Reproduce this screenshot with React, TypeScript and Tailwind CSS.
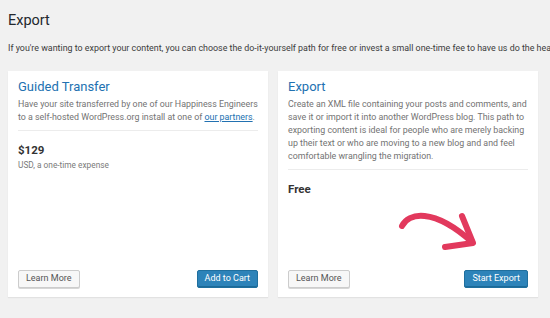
import React from "react";

const font = { fontFamily: 'Roboto, "Liberation Sans", Arial, sans-serif' };

function Button({ primary, children }: { primary?: boolean; children: React.ReactNode }) {
  return primary ? (
    <button className="h-[18px] px-[7px] rounded-[2px] border border-[#1f6f9e] bg-[#2d83b9] text-[9px] text-white shadow-[inset_0_-1px_0_#1b6a98]">
      {children}
    </button>
  ) : (
    <button className="h-[18px] px-[7px] rounded-[2px] border border-[#cccccc] bg-[#f7f7f7] text-[9px] text-[#555555] shadow-[0_1px_0_#d6d6d6]">
      {children}
    </button>
  );
}

function Card({
  title,
  lines,
  price,
  note,
  action,
  overlay,
}: {
  title: string;
  lines: React.ReactNode[];
  price: string;
  note?: string;
  action: string;
  overlay?: React.ReactNode;
}) {
  return (
    <div className="relative flex h-[226px] flex-col bg-white px-[10px] pt-[8px] pb-[9px] shadow-[0_1px_1px_#e2e2e2]">
      <h2 className="text-[13px] leading-[16px] text-[#2271b1]">{title}</h2>
      <div className="mt-[3px] text-[8.85px] leading-[13px] text-[#737373]">
        {lines.map((l, i) => (
          <div key={i} className="whitespace-nowrap">
            {l}
          </div>
        ))}
      </div>
      <div className="mt-[6px] h-px bg-[#ececec]" />
      <div className="mt-[12px] text-[11.5px] font-bold leading-[14px] text-[#333333]">{price}</div>
      {note && <div className="mt-[3px] text-[8.3px] leading-[10px] text-[#7a7a7a]">{note}</div>}
      <div className="mt-auto flex items-center justify-between">
        <Button>Learn More</Button>
        <Button primary>{action}</Button>
      </div>
      {overlay}
    </div>
  );
}

function Arrow() {
  return (
    <svg className="pointer-events-none absolute inset-0" width="260" height="226" viewBox="0 0 260 226">
      <g fill="none" stroke="#e2395d" strokeWidth="6" strokeLinecap="round" strokeLinejoin="round">
        <path d="M124 155 C130 142 155 136 194 171" />
        <path d="M184 145 L195 172 L167 176" />
      </g>
    </svg>
  );
}

export default function App() {
  return (
    <div className="h-[318px] w-[550px] overflow-hidden bg-[#f1f1f1]" style={font}>
      <div className="pl-[8px] pr-[12px] pt-[11px]">
        <h1 className="text-[14.5px] leading-[20px] text-[#23282d]">Export</h1>
        <p className="mt-[11px] whitespace-nowrap text-[8.9px] leading-[12px] text-[#3c3c3c]">
          If you're wanting to export your content, you can choose the do-it-yourself path for free or invest a small one-time fee to have us do the heavy lifting for you.
        </p>
        <div className="mt-[17px] grid grid-cols-2 gap-[10px]">
          <Card
            title="Guided Transfer"
            price="$129"
            note="USD, a one-time expense"
            action="Add to Cart"
            lines={[
              "Have your site transferred by one of our Happiness Engineers",
              <>
                to a self-hosted WordPress.org install at one of{" "}
                <a href="#" className="text-[#2271b1] underline">
                  our partners
                </a>
                .
              </>,
            ]}
          />
          <Card
            title="Export"
            price="Free"
            action="Start Export"
            overlay={<Arrow />}
            lines={[
              "Create an XML file containing your posts and comments, and",
              "save it or import it into another WordPress blog. This path to",
              "exporting content is ideal for people who are merely backing",
              "up their text or who are moving to a new blog and and feel",
              "comfortable wrangling the migration.",
            ]}
          />
        </div>
      </div>
    </div>
  );
}
